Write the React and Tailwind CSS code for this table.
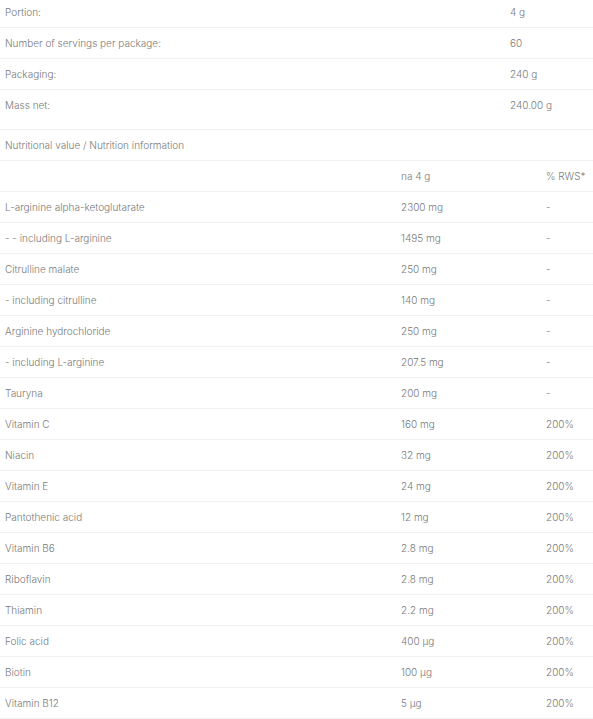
const info = [
  ["Portion:", "4 g"],
  ["Number of servings per package:", "60"],
  ["Packaging:", "240 g"],
  ["Mass net:", "240.00 g"],
];

const rows = [
  ["L-arginine alpha-ketoglutarate", "2300 mg", "-"],
  ["- - including L-arginine", "1495 mg", "-"],
  ["Citrulline malate", "250 mg", "-"],
  ["- including citrulline", "140 mg", "-"],
  ["Arginine hydrochloride", "250 mg", "-"],
  ["- including L-arginine", "207.5 mg", "-"],
  ["Tauryna", "200 mg", "-"],
  ["Vitamin C", "160 mg", "200%"],
  ["Niacin", "32 mg", "200%"],
  ["Vitamin E", "24 mg", "200%"],
  ["Pantothenic acid", "12 mg", "200%"],
  ["Vitamin B6", "2.8 mg", "200%"],
  ["Riboflavin", "2.8 mg", "200%"],
  ["Thiamin", "2.2 mg", "200%"],
  ["Folic acid", "400 µg", "200%"],
  ["Biotin", "100 µg", "200%"],
  ["Vitamin B12", "5 µg", "200%"],
];

export default function App() {
  return (
    <div className="w-[593px] h-[719px] overflow-hidden bg-white font-['Inter',sans-serif] font-light text-[10px] text-[#7a7a7a]">
      <div className="-mt-[3px]">
        {info.map(([label, value], i) => (
          <div
            key={label}
            className={
              "grid grid-cols-[505px_1fr] border-b border-[#f2f2f2] " +
              (i === info.length - 1 ? "h-[40px] items-start pt-[8px]" : "h-[31px] items-center")
            }
          >
            <div className="pl-[5px]">{label}</div>
            <div className="pl-[5px]">{value}</div>
          </div>
        ))}
        <div className="h-[31px] flex items-center pl-[5px] border-b border-[#f2f2f2]">
          Nutritional value / Nutrition information
        </div>
        <div className="grid grid-cols-[396px_145px_1fr] h-[31px] items-center border-b border-[#f2f2f2]">
          <div className="pl-[5px]"></div>
          <div className="pl-[5px]">na 4 g</div>
          <div className="pl-[5px]">% RWS*</div>
        </div>
        {rows.map(([name, amount, rws]) => (
          <div
            key={name}
            className="grid grid-cols-[396px_145px_1fr] h-[31px] items-center border-b border-[#f2f2f2]"
          >
            <div className="pl-[5px]">{name}</div>
            <div className="pl-[5px]">{amount}</div>
            <div className="pl-[5px]">{rws}</div>
          </div>
        ))}
      </div>
    </div>
  );
}
